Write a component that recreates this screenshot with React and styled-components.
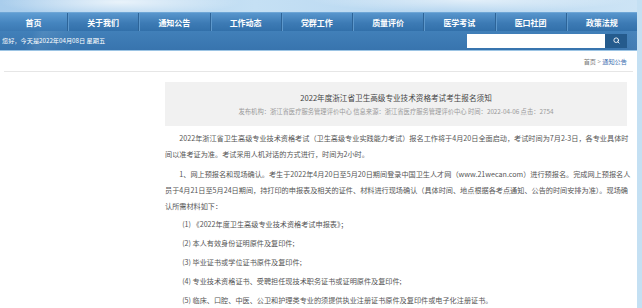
import React from 'react'
import styled, { createGlobalStyle } from 'styled-components'
import { Search } from 'lucide-react'

const GlobalStyle = createGlobalStyle`
    body {
        margin: 0;
        background: #cfe6f5;
        font-family: "Noto Sans CJK SC", "Noto Sans", sans-serif;
    }
`

const Page = styled.div`
    width: 642px;
    height: 308px;
    overflow: hidden;
    background: linear-gradient(to right, #d4e9f7, #c4e0f3);
`

const Frame = styled.div`
    width: 637px;
`

const Sky = styled.div`
    height: 12px;
    background:
        radial-gradient(ellipse 120px 14px at 120px 2px, rgba(255,255,255,0.7), transparent),
        radial-gradient(ellipse 160px 12px at 470px 0px, rgba(255,255,255,0.6), transparent),
        linear-gradient(to right, #a9cdec, #c5e0f4 40%, #b6d6f0 70%, #cde4f5);
`

const Nav = styled.div`
    display: grid;
    grid-template-columns: 67px repeat(8, 1fr);
    height: 18px;
    background: linear-gradient(#5896cd, #3d7bb5 55%, #3270aa);
    border-top: 1px solid #6ea6d6;
`

const NavItem = styled.div`
    display: flex;
    align-items: center;
    justify-content: center;
    color: #fff;
    font-size: 8px;
    font-weight: bold;
    border-left: ${p => (p.$first ? 'none' : '1px solid #2d6498')};
    box-shadow: ${p => (p.$first ? 'none' : 'inset 1px 0 0 #5d98cc')};
    background: ${p => (p.$active ? 'linear-gradient(#5f9dd3, #4585bf 55%, #3b79b3)' : 'transparent')};
`

const SubBar = styled.div`
    height: 19px;
    display: flex;
    align-items: center;
    justify-content: space-between;
    padding: 0 10px 0 2px;
    background:
        linear-gradient(115deg, transparent 30px, rgba(255,255,255,0.08) 40px, transparent 70px),
        linear-gradient(115deg, transparent 560px, rgba(255,255,255,0.1) 600px, transparent 637px),
        linear-gradient(#4180b9, #3874ae);
    border-bottom: 1px solid #9cc4e4;
`

const Greeting = styled.span`
    color: #fff;
    font-size: 6.2px;
`

const SearchBox = styled.div`
    display: flex;
    height: 14px;
`

const SearchInput = styled.div`
    width: 138px;
    background: #fff;
`

const SearchButton = styled.div`
    width: 22px;
    display: flex;
    align-items: center;
    justify-content: center;
    background: #255b8d;
    color: #fff;
`

const Main = styled.div`
    background: #fff;
    height: 258px;
    padding: 0 4px 0 4px;
`

const Crumbs = styled.div`
    height: 20px;
    display: flex;
    align-items: center;
    justify-content: flex-end;
    padding-right: 6px;
    border-bottom: 1px solid #e6e6e6;
    font-size: 6.2px;
    color: #777;
`

const CrumbLink = styled.span`
    color: #3c6fb0;
`

const Body = styled.div`
    display: flex;
    padding-top: 10px;
`

const Side = styled.div`
    width: 161px;
    flex-shrink: 0;
`

const Article = styled.div`
    width: 468px;
`

const InfoBox = styled.div`
    width: 462px;
    height: 44px;
    background: #f1f1f1;
    display: flex;
    flex-direction: column;
    align-items: center;
    justify-content: center;
    gap: 4px;
`

const Title = styled.div`
    font-size: 7.6px;
    color: #444;
`

const Meta = styled.div`
    font-size: 6.3px;
    color: #999;
`

const Text = styled.p`
    margin: 0 0 ${p => p.$gap}px;
    font-size: 7.15px;
    line-height: 16px;
    color: #555;
    text-indent: ${p => (p.$item ? '2.4em' : '2em')};
`

const Content = styled.div`
    padding-top: 4px;
`

const navs = ['首页', '关于我们', '通知公告', '工作动态', '党群工作', '质量评价', '医学考试', '医口社团', '政策法规']

const items = [
    '(1) 《2022年度卫生高级专业技术资格考试申报表》；',
    '(2) 本人有效身份证明原件及复印件;',
    '(3) 毕业证书或学位证书原件及复印件;',
    '(4) 专业技术资格证书、受聘担任现技术职务证书或证明原件及复印件;',
    '(5) 临床、口腔、中医、公卫和护理类专业的须提供执业注册证书原件及复印件或电子化注册证书。',
]

const App = () => {
    return (
        <Page>
            <GlobalStyle />
            <Frame>
                <Sky />
                <Nav>
                    {navs.map((n, i) => (
                        <NavItem key={n} $first={i === 0} $active={i === 0}>{n}</NavItem>
                    ))}
                </Nav>
                <SubBar>
                    <Greeting>您好，今天是2022年04月08日 星期五</Greeting>
                    <SearchBox>
                        <SearchInput />
                        <SearchButton><Search size={7} strokeWidth={3} /></SearchButton>
                    </SearchBox>
                </SubBar>
                <Main>
                    <Crumbs>首页 &gt; <CrumbLink>&nbsp;通知公告</CrumbLink></Crumbs>
                    <Body>
                        <Side />
                        <Article>
                            <InfoBox>
                                <Title>2022年度浙江省卫生高级专业技术资格考试考生报名须知</Title>
                                <Meta>发布机构：浙江省医疗服务管理评价中心 信息来源：浙江省医疗服务管理评价中心 时间：2022-04-06 点击：2754</Meta>
                            </InfoBox>
                            <Content>
                                <Text $gap={4}>2022年浙江省卫生高级专业技术资格考试（卫生高级专业实践能力考试）报名工作将于4月20日全面启动，考试时间为7月2-3日，各专业具体时间以准考证为准。考试采用人机对话的方式进行，时间为2小时。</Text>
                                <Text $gap={2}>1、网上预报名和现场确认。考生于2022年4月20日至5月20日期间登录中国卫生人才网（www.21wecan.com）进行预报名。完成网上预报名人员于4月21日至5月24日期间，持打印的申报表及相关的证件、材料进行现场确认（具体时间、地点根据各考点通知、公告的时间安排为准）。现场确认所需材料如下：</Text>
                                {items.map(t => (
                                    <Text key={t} $item $gap={3}>{t}</Text>
                                ))}
                            </Content>
                        </Article>
                    </Body>
                </Main>
            </Frame>
        </Page>
    )
}

export default App
